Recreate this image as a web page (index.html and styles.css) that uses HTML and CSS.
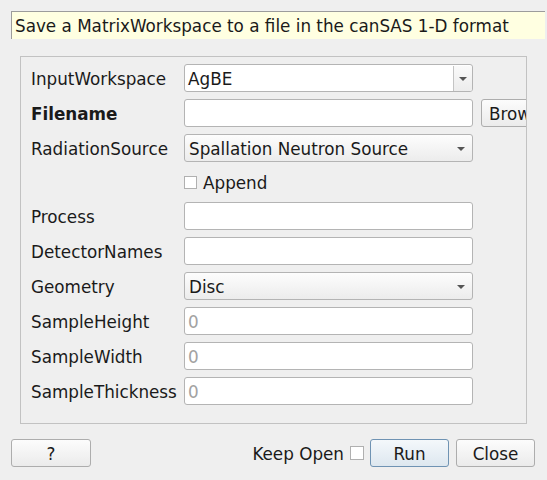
FILE: index.html
```html
<!DOCTYPE html>
<html>
<head>
<meta charset="utf-8">
<link rel="stylesheet" href="styles.css">
</head>
<body>
<div class="desc">Save a MatrixWorkspace to a file in the canSAS 1-D format</div>
<div class="group">
  <div class="form">
    <div class="label">InputWorkspace</div>
    <div class="combo editable"><span class="ctext">AgBE</span><span class="abtn"><span class="arrow"></span></span></div>
    <div></div>

    <div class="label bold">Filename</div>
    <div class="field"></div>
    <div class="btn browse">Browse</div>

    <div class="label">RadiationSource</div>
    <div class="combo"><span class="ctext">Spallation Neutron Source</span><span class="abtn plain"><span class="arrow"></span></span></div>
    <div></div>

    <div></div>
    <div class="check"><span class="box"></span><span class="ctxt">Append</span></div>
    <div></div>

    <div class="label">Process</div>
    <div class="field"></div>
    <div></div>

    <div class="label">DetectorNames</div>
    <div class="field"></div>
    <div></div>

    <div class="label">Geometry</div>
    <div class="combo"><span class="ctext">Disc</span><span class="abtn plain"><span class="arrow"></span></span></div>
    <div></div>

    <div class="label">SampleHeight</div>
    <div class="field"><span class="ph">0</span></div>
    <div></div>

    <div class="label">SampleWidth</div>
    <div class="field"><span class="ph">0</span></div>
    <div></div>

    <div class="label">SampleThickness</div>
    <div class="field"><span class="ph">0</span></div>
    <div></div>
  </div>
</div>
<div class="footer">
  <div class="btn help">?</div>
  <div class="spacer"></div>
  <div class="keep">Keep Open</div>
  <span class="box keepbox"></span>
  <div class="btn run">Run</div>
  <div class="btn close">Close</div>
</div>
</body>
</html>
```

FILE: styles.css
```css
html, body {
  margin: 0;
  padding: 0;
  background: #efefef;
  font-family: "DejaVu Sans", sans-serif;
  font-size: 16.8px;
  color: #1a1a1a;
}
body {
  width: 547px;
  height: 480px;
  overflow: hidden;
}
.desc {
  margin: 11px 2px 0 11px;
  height: 28px;
  box-sizing: border-box;
  background: #ffffe1;
  border-top: 1px solid #9c9c9c;
  border-left: 1px solid #9c9c9c;
  padding-left: 3px;
  padding-top: 1px;
  line-height: 26px;
  white-space: nowrap;
}
.group {
  margin: 17px 0 0 20px;
  width: 507px;
  height: 368px;
  box-sizing: border-box;
  border: 1px solid #c2c2c2;
  overflow: hidden;
}
.form {
  display: grid;
  grid-template-columns: 153px 289px 80px;
  grid-template-rows: 28px 28px 28px 26px 28px 28px 28px 28px 28px 28px;
  column-gap: 0;
  row-gap: 7px;
  padding: 7px 0 0 10px;
}
.label {
  display: flex;
  align-items: center;
  white-space: nowrap;
  padding-top: 2px;
}
.bold { font-weight: bold; }
.field, .combo {
  box-sizing: border-box;
  height: 28px;
  border: 1px solid #b4b4b4;
  border-radius: 3px;
  background: #ffffff;
  display: flex;
  align-items: center;
  padding-left: 3px;
  padding-top: 1px;
}
.combo {
  padding-left: 4px;
  padding-right: 0;
  background: linear-gradient(#fdfdfd, #ececec);
}
.combo.editable {
  background: #ffffff;
  padding-left: 3px;
}
.ctext {
  flex: 1;
  white-space: nowrap;
}
.abtn {
  width: 19px;
  height: 100%;
  box-sizing: border-box;
  border-left: 1px solid #c4c4c4;
  background: linear-gradient(#fafafa, #ececec);
  display: flex;
  align-items: center;
  justify-content: center;
  border-radius: 0 2px 2px 0;
}
.abtn.plain {
  border-left: none;
  background: transparent;
  width: 22px;
}
.arrow {
  width: 0;
  height: 0;
  border-left: 4px solid transparent;
  border-right: 4px solid transparent;
  border-top: 4px solid #555555;
}
.ph {
  color: #a2a2a2;
}
.check {
  display: flex;
  align-items: center;
  gap: 6px;
}
.ctxt { padding-top: 2px; }
.box {
  display: inline-block;
  width: 13px;
  height: 13px;
  box-sizing: border-box;
  border: 1px solid #b0b0b0;
  background: #ffffff;
}
.btn {
  box-sizing: border-box;
  height: 28px;
  border: 1px solid #adadad;
  border-radius: 3px;
  background: linear-gradient(#fcfcfc, #ebebeb);
  display: flex;
  align-items: center;
  justify-content: center;
  white-space: nowrap;
  padding-top: 1px;
}
.browse {
  margin-left: 8px;
  width: 80px;
  justify-content: flex-start;
  padding-left: 7px;
}
.footer {
  display: flex;
  align-items: center;
  margin: 15px 12px 0 11px;
  height: 28px;
}
.help { width: 80px; }
.spacer { flex: 1; }
.keep { margin-right: 6px; padding-top: 2px; }
.keepbox {
  width: 14px;
  height: 14px;
  margin-right: 6px;
}
.run {
  width: 79px;
  border-color: #6f93b3;
  background: linear-gradient(#f4f8fb, #dde7ef);
  margin-right: 7px;
}
.close { width: 79px; }
```
